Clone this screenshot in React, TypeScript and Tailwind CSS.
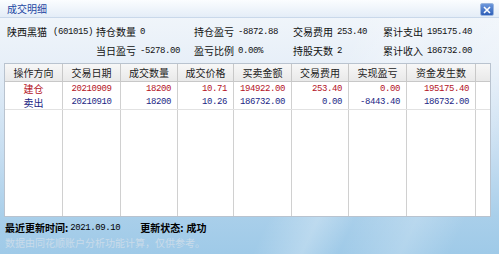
const cjk = "font-['SimSun','Noto_Sans_CJK_SC',sans-serif] leading-none";
const num = "font-['Liberation_Mono',monospace] text-[9px] tracking-[-0.4px] leading-none";

const cols = "grid grid-cols-[58px_58px_57px_56px_58px_57px_58px_69px_16px]";

const headers = ["操作方向", "交易日期", "成交数量", "成交价格", "买卖金额", "交易费用", "实现盈亏", "资金发生数"];

const rows = [
  { dir: "建仓", date: "20210909", qty: "18200", price: "10.71", amount: "194922.00", fee: "253.40", pnl: "0.00", cash: "195175.40", color: "text-[#b3121e]" },
  { dir: "卖出", date: "20210910", qty: "18200", price: "10.26", amount: "186732.00", fee: "0.00", pnl: "-8443.40", cash: "186732.00", color: "text-[#1b1f84]" },
];

const Info = ({ label, value }: { label: string; value: string }) => (
  <div className="flex items-center gap-[4px]">
    <span className={`${cjk} text-[10px] text-[#111]`}>{label}</span>
    <span className={`${num} text-[#111] pt-[1px]`}>{value}</span>
  </div>
);

export default function App() {
  return (
    <div className="w-[499px] h-[254px] overflow-hidden flex flex-col bg-[linear-gradient(115deg,transparent_60%,rgba(255,255,255,0.25)_68%,transparent_74%,rgba(255,255,255,0.2)_84%,transparent_92%),linear-gradient(180deg,#f3f7fb_0%,#e7eff8_25%,#c7def1_60%,#a9cfea_85%,#9fcae8_100%)]">
      {/* title bar */}
      <div className="h-[18px] flex items-center justify-between pl-[7px] pr-[5px] bg-[linear-gradient(180deg,#fbfdff_0%,#e4edf7_100%)] border-b border-[#c9d8ea]">
        <span className={`${cjk} text-[10px] text-[#2447a3]`}>成交明细</span>
        <div className="w-[14px] h-[13px] mt-[2px] rounded-[2px] border border-[#9bb6de] bg-[linear-gradient(180deg,#6b97dc_0%,#2f5fb8_100%)] flex items-center justify-center">
          <svg width="8" height="8" viewBox="0 0 8 8">
            <path d="M1 1 L7 7 M7 1 L1 7" stroke="#fff" strokeWidth="1.6" />
          </svg>
        </div>
      </div>

      {/* summary */}
      <div className="pl-[7px] pt-[4px] h-[45px] flex flex-col">
        <div className="h-[19px] grid grid-cols-[89px_98px_99px_90px_1fr] items-center">
          <div className="flex items-center gap-[6px]">
            <span className={`${cjk} text-[10px] text-[#111]`}>陕西黑猫</span>
            <span className={`${num} text-[#111] pt-[1px]`}>(601015)</span>
          </div>
          <Info label="持仓数量" value="0" />
          <Info label="持仓盈亏" value="-8872.88" />
          <Info label="交易费用" value="253.40" />
          <Info label="累计支出" value="195175.40" />
        </div>
        <div className="h-[19px] grid grid-cols-[89px_98px_99px_90px_1fr] items-center">
          <div />
          <Info label="当日盈亏" value="-5278.00" />
          <Info label="盈亏比例" value="0.00%" />
          <Info label="持股天数" value="2" />
          <Info label="累计收入" value="186732.00" />
        </div>
      </div>

      {/* table */}
      <div className="ml-[4px] w-[487px] h-[154px] bg-white border border-[#b9c3cf] flex flex-col">
        <div className={`${cols} h-[18px] bg-[linear-gradient(180deg,#f7f7f7_0%,#e9e9e9_100%)] border-b border-[#c8c8c8]`}>
          {headers.map((h) => (
            <div key={h} className={`${cjk} text-[10px] text-[#222] flex items-center justify-center border-r border-[#c8c8c8]`}>
              {h}
            </div>
          ))}
          <div />
        </div>
        {rows.map((r, i) => (
          <div key={r.date} className={`${cols} h-[14px] ${i === 1 ? "border-b border-[#e2e2e2]" : ""} ${r.color}`}>
            <div className={`${cjk} text-[10px] flex items-center justify-center border-r border-[#d0d0d0]`}>{r.dir}</div>
            <div className={`${num} flex items-center justify-center border-r border-[#d0d0d0]`}>{r.date}</div>
            {[r.qty, r.price, r.amount, r.fee, r.pnl, r.cash].map((v, j) => (
              <div key={j} className={`${num} flex items-center justify-end pr-[6px] border-r border-[#d0d0d0]`}>{v}</div>
            ))}
            <div />
          </div>
        ))}
        <div className={`${cols} flex-1`}>
          {headers.map((h) => (
            <div key={h} className="border-r border-[#d0d0d0]" />
          ))}
          <div />
        </div>
      </div>

      {/* footer */}
      <div className="pl-[5px] pt-[4px] flex flex-col">
        <div className="h-[14px] flex items-center">
          <span className={`${cjk} text-[10px] text-black font-bold`}>最近更新时间:</span>
          <span className={`${num} text-black ml-[2px] pt-[1px]`}>2021.09.10</span>
          <span className={`${cjk} text-[10px] text-black font-bold ml-[20px]`}>更新状态:</span>
          <span className={`${cjk} text-[10px] text-black font-bold ml-[3px]`}>成功</span>
        </div>
        <div className={`${cjk} h-[15px] flex items-center text-[10px] text-[#c9dbea]`}>
          数据由同花顺账户分析功能计算，仅供参考。
        </div>
      </div>
    </div>
  );
}
